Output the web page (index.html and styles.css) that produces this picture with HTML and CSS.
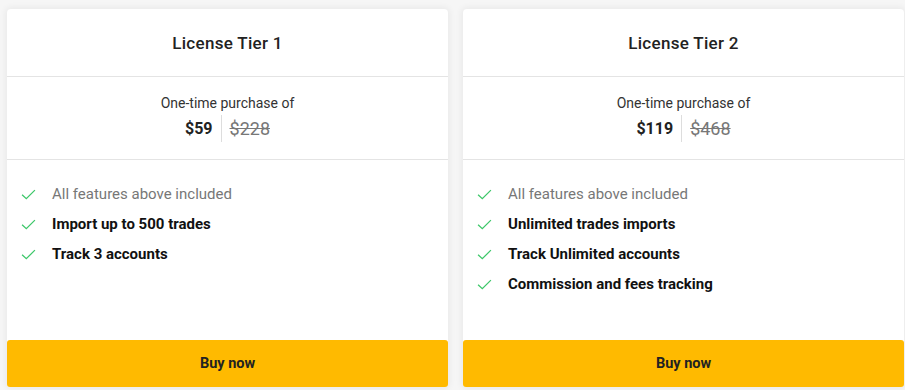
FILE: index.html
```html
<!DOCTYPE html>
<html lang="en">
<head>
<meta charset="utf-8">
<title>Licenses</title>
<link rel="stylesheet" href="styles.css">
</head>
<body>
<div class="plans">
  <section class="plan">
    <h2 class="plan-title">License Tier 1</h2>
    <div class="plan-price">
      <div class="price-label">One-time purchase of</div>
      <div class="price-row">
        <span class="price-now">$59</span>
        <span class="price-old">$228</span>
      </div>
    </div>
    <ul class="features">
      <li class="feature muted"><svg class="check" viewBox="0 0 16 12"><path d="M1 6.2l4.6 4.4L15 1.2"/></svg>All features above included</li>
      <li class="feature"><svg class="check" viewBox="0 0 16 12"><path d="M1 6.2l4.6 4.4L15 1.2"/></svg>Import up to 500 trades</li>
      <li class="feature"><svg class="check" viewBox="0 0 16 12"><path d="M1 6.2l4.6 4.4L15 1.2"/></svg>Track 3 accounts</li>
    </ul>
    <button class="buy">Buy now</button>
  </section>
  <section class="plan">
    <h2 class="plan-title">License Tier 2</h2>
    <div class="plan-price">
      <div class="price-label">One-time purchase of</div>
      <div class="price-row">
        <span class="price-now">$119</span>
        <span class="price-old">$468</span>
      </div>
    </div>
    <ul class="features">
      <li class="feature muted"><svg class="check" viewBox="0 0 16 12"><path d="M1 6.2l4.6 4.4L15 1.2"/></svg>All features above included</li>
      <li class="feature"><svg class="check" viewBox="0 0 16 12"><path d="M1 6.2l4.6 4.4L15 1.2"/></svg>Unlimited trades imports</li>
      <li class="feature"><svg class="check" viewBox="0 0 16 12"><path d="M1 6.2l4.6 4.4L15 1.2"/></svg>Track Unlimited accounts</li>
      <li class="feature"><svg class="check" viewBox="0 0 16 12"><path d="M1 6.2l4.6 4.4L15 1.2"/></svg>Commission and fees tracking</li>
    </ul>
    <button class="buy">Buy now</button>
  </section>
</div>
</body>
</html>
```
FILE: styles.css
```css
* { box-sizing: border-box; }

html, body {
  margin: 0;
  height: 100%;
}

body {
  background: #f6f6f6;
  font-family: Roboto, "Liberation Sans", sans-serif;
  color: #222;
  padding: 9px 1px 3px 7px;
}

.plans {
  display: grid;
  grid-template-columns: 441px 441px;
  gap: 15px;
  height: 378px;
}

.plan {
  background: #fff;
  border-radius: 4px;
  box-shadow: 0 0 6px 2px rgba(0, 0, 0, 0.05);
  display: flex;
  flex-direction: column;
}

.plan-title {
  margin: 0;
  height: 68px;
  display: flex;
  align-items: center;
  justify-content: center;
  font-size: 17px;
  font-weight: 500;
  letter-spacing: 0.3px;
  color: #222;
  border-bottom: 1px solid #e4e4e4;
  padding-top: 1px;
}

.plan-price {
  height: 83px;
  border-bottom: 1px solid #e4e4e4;
  display: flex;
  flex-direction: column;
  align-items: center;
  padding-top: 17px;
}

.price-label {
  font-size: 14px;
  color: #333;
  line-height: 18px;
}

.price-row {
  display: flex;
  align-items: center;
  margin-top: 3px;
  height: 27px;
}

.price-now {
  font-size: 16px;
  font-weight: 700;
  color: #222;
  padding-right: 8px;
  border-right: 1px solid #ddd;
  line-height: 27px;
}

.price-old {
  font-size: 18px;
  color: #777;
  text-decoration: line-through;
  padding-left: 8px;
  line-height: 27px;
}

.features {
  list-style: none;
  margin: 0;
  padding: 19px 0 0 14px;
  flex: 1;
}

.feature {
  display: flex;
  align-items: center;
  height: 30px;
  font-size: 15px;
  font-weight: 700;
  color: #111;
}

.feature.muted {
  font-weight: 400;
  color: #777;
}

.check {
  width: 15px;
  height: 11px;
  margin-right: 16px;
  fill: none;
  stroke: #3ec76a;
  stroke-width: 1.4;
}

.buy {
  height: 47px;
  border: 0;
  border-radius: 3px;
  background: #ffba00;
  font-family: Roboto, "Liberation Sans", sans-serif;
  font-size: 14.5px;
  font-weight: 700;
  color: #222;
  cursor: pointer;
}
```
